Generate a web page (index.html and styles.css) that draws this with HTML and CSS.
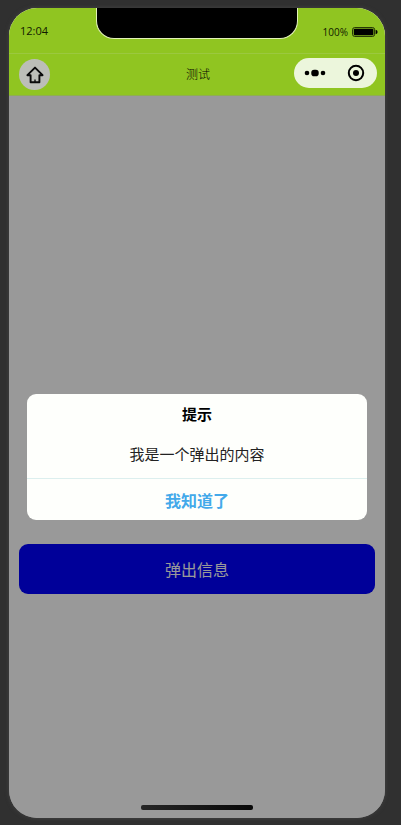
FILE: index.html
```html
<!DOCTYPE html>
<html lang="zh-CN">
<head>
<meta charset="utf-8">
<meta name="viewport" content="width=device-width, initial-scale=1">
<title>测试</title>
<link rel="stylesheet" href="styles.css">
</head>
<body>
<div class="phone">
  <header class="header">
    <div class="status">
      <span class="time">12:04</span>
      <div class="notch"></div>
      <div class="power">
        <span>100%</span>
        <svg class="battery" width="26" height="10" viewBox="0 0 26 10" aria-hidden="true">
          <rect x="0.6" y="0.6" width="22" height="8.8" rx="2" fill="none" stroke="#1c2a04" stroke-width="1"/>
          <rect x="1.8" y="1.8" width="19.6" height="6.4" rx="0.8" fill="#000"/>
          <path d="M23.6 2.8Q25.6 3.2 25.6 5T23.6 7.2Z" fill="#000"/>
        </svg>
      </div>
    </div>
    <nav class="navbar">
      <button class="home" type="button" aria-label="首页">
        <svg width="18" height="18" viewBox="0 0 18 18" aria-hidden="true">
          <path d="M9 1.6L16.6 9.2H13.4V16.2H4.6V9.2H1.4Z" fill="none" stroke="#0a0a0a" stroke-width="1.9" stroke-linejoin="round"/>
          <path d="M9 13.6V16" stroke="#0a0a0a" stroke-width="1.4"/>
        </svg>
      </button>
      <h1 class="title">测试</h1>
      <div class="capsule">
        <button class="capsule-button" type="button" aria-label="更多">
          <svg width="22" height="18" viewBox="0 0 22 18" aria-hidden="true">
            <circle cx="3" cy="9" r="2.3"/><rect x="7.3" y="5.8" width="7.4" height="6.4" rx="2.8"/><circle cx="19" cy="9" r="2.3"/>
          </svg>
        </button>
        <button class="capsule-button" type="button" aria-label="关闭">
          <svg width="18" height="18" viewBox="0 0 18 18" aria-hidden="true">
            <circle cx="9" cy="9" r="7.2" fill="none" stroke="#000" stroke-width="2"/><circle cx="9" cy="9" r="3"/>
          </svg>
        </button>
      </div>
    </nav>
  </header>
  <main class="page">
    <button class="show" type="button">弹出信息</button>
    <div class="mask">
      <section class="dialog" role="dialog" aria-modal="true" aria-labelledby="dialog-title">
        <h2 class="dialog-title" id="dialog-title">提示</h2>
        <p class="dialog-text">我是一个弹出的内容</p>
        <button class="dialog-confirm" type="button">我知道了</button>
      </section>
    </div>
    <div class="home-bar"></div>
  </main>
</div>
</body>
</html>
```
FILE: styles.css
```css
* {
  box-sizing: border-box;
}

body {
  margin: 0;
  min-height: 100vh;
  padding: 8px 16px 7px 9px;
  display: flex;
  background: #303030;
  color: #000;
  font-family: "Open Sans", "Noto Sans CJK SC", sans-serif;
}

button {
  margin: 0;
  padding: 0;
  border: 0;
  background: none;
  font: inherit;
}

svg {
  display: block;
}

.phone {
  flex: 1;
  display: flex;
  flex-direction: column;
  overflow: hidden;
  border-radius: 28px;
  background: #fff;
  box-shadow: 0 0 4px #444;
}

.header {
  background: #90c521;
  border-bottom: 1px solid #8fae52;
}

.status {
  height: 45px;
  display: grid;
  grid-template-columns: 1fr 202px 1fr;
  align-items: start;
  color: #101a00;
}

.time {
  padding: 14px 0 0 11px;
  font-size: 11px;
  line-height: 18px;
}

.notch {
  height: 31px;
  background: #000;
  border: solid #e2f2b8;
  border-width: 0 1px 1px;
  border-radius: 0 0 18px 18px;
}

.power {
  display: flex;
  justify-content: flex-end;
  align-items: center;
  gap: 4px;
  padding: 15px 7px 0 0;
  font-size: 10px;
  line-height: 18px;
}

.navbar {
  height: 42px;
  padding: 0 8px 0 10px;
  display: grid;
  grid-template-columns: 1fr auto 1fr;
  align-items: center;
  border-top: 1px solid #9bc83f;
}

.home {
  width: 31px;
  height: 31px;
  display: grid;
  place-items: center;
  border-radius: 50%;
  background: #bcbeb8;
}

.title {
  margin: 0;
  font-size: 12px;
  font-weight: 300;
  line-height: 18px;
}

.capsule {
  justify-self: end;
  width: 83px;
  height: 30px;
  margin-bottom: 4px;
  display: grid;
  grid-template-columns: 1fr 1fr;
  border-radius: 15px;
  background: #ecf6dc;
}

.capsule-button {
  display: grid;
  place-items: center;
}

.page {
  flex: 1;
  position: relative;
  display: flex;
  flex-direction: column;
  padding: 0 10px;
}

.page::before {
  content: "";
  flex: 2;
}

.page::after {
  content: "";
  flex: 1;
}

.show {
  height: 50px;
  border-radius: 9px;
  background: #00f;
  color: #fff;
  font-size: 16px;
}

.mask {
  position: absolute;
  inset: 0;
  display: flex;
  align-items: center;
  padding: 0 18px;
  background: rgba(0, 0, 0, 0.4);
}

.dialog {
  flex: 1;
  overflow: hidden;
  border-radius: 9px;
  background: #fefffc;
  text-align: center;
}

.dialog-title {
  margin: 0;
  padding-top: 9px;
  font-size: 15px;
  font-weight: 700;
  line-height: 22px;
}

.dialog-text {
  margin: 0;
  padding: 18px 12px 13px;
  color: #222;
  font-size: 15px;
  line-height: 22px;
}

.dialog-confirm {
  width: 100%;
  height: 42px;
  border-top: 1px solid #dcefee;
  color: #43a9ea;
  font-size: 16px;
  font-weight: 700;
}

.home-bar {
  position: absolute;
  bottom: 8px;
  left: 50%;
  width: 112px;
  height: 5px;
  margin-left: -56px;
  border-radius: 2px;
  background: linear-gradient(90deg, #262626, #080808);
}
```
